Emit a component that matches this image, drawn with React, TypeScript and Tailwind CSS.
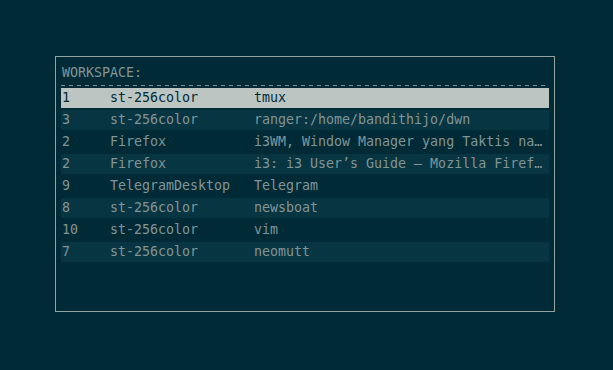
import React from 'react';

interface WindowRow {
  ws: string;
  cls: string;
  title: string;
}

const rows: WindowRow[] = [
  { ws: '1', cls: 'st-256color', title: 'tmux' },
  { ws: '3', cls: 'st-256color', title: 'ranger:/home/bandithijo/dwn' },
  { ws: '2', cls: 'Firefox', title: 'i3WM, Window Manager yang Taktis na…' },
  { ws: '2', cls: 'Firefox', title: 'i3: i3 User’s Guide – Mozilla Firef…' },
  { ws: '9', cls: 'TelegramDesktop', title: 'Telegram' },
  { ws: '8', cls: 'st-256color', title: 'newsboat' },
  { ws: '10', cls: 'st-256color', title: 'vim' },
  { ws: '7', cls: 'st-256color', title: 'neomutt' },
];

export default function App() {
  return (
    <div
      className="w-full min-h-screen bg-[#002b36] pt-[56px] pl-[55px] text-[13.3px] text-[#839496]"
      style={{ fontFamily: '"DejaVu Sans Mono", "Liberation Mono", monospace' }}
    >
      <div className="w-[500px] h-[256px] border border-[#93a1a1] p-[5px] flex flex-col">
        <div className="pt-[3px] pb-[4px] pl-px leading-[16px] whitespace-pre">WORKSPACE:</div>
        <div className="h-px bg-[repeating-linear-gradient(90deg,#839496_0_4px,transparent_4px_8px)]" />

        <div className="mt-[2px] flex flex-col gap-[2px]">
          {rows.map((r, i) => {
            const selected = i === 0;
            const bg = selected ? 'bg-[#bdc5c2] text-[#002b36]' : i % 2 === 1 ? 'bg-[#073642]' : 'bg-transparent';
            return (
              <div key={i} className={`h-[20px] flex items-start pt-[2px] pl-px leading-[16px] whitespace-pre ${bg}`}>
                <span className="w-[48px] shrink-0">{r.ws}</span>
                <span className="w-[144px] shrink-0">{r.cls}</span>
                <span className="flex-1 overflow-hidden">{r.title}</span>
              </div>
            );
          })}
        </div>
      </div>
    </div>
  );
}
